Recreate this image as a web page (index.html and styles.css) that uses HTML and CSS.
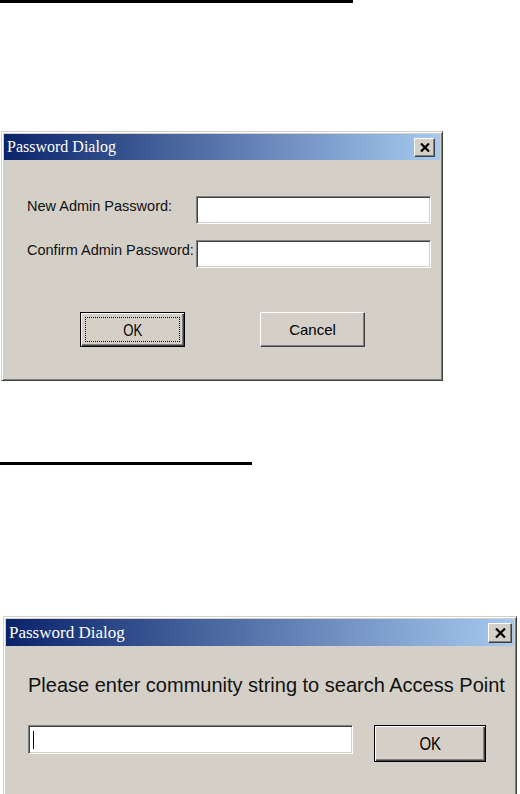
FILE: index.html
```html
<!DOCTYPE html>
<html>
	<head>
		<meta charset="UTF-8">
		<title>Password Dialog</title>
		<link rel="stylesheet" href="styles.css">
	</head>
	<body>
		<div class="page">
			<div class="rule rule-long"></div>

			<section class="dialog dialog-admin">
				<div class="titlebar">
					<span class="title">Password Dialog</span>
					<span class="close-btn">
						<svg width="10" height="9" viewBox="0 0 10 9"><path d="M1 0.5 L9 8.5 M9 0.5 L1 8.5" stroke="#000" stroke-width="2.2" fill="none"/></svg>
					</span>
				</div>
				<div class="admin-body">
					<div class="field-grid">
						<label class="field-label">New Admin Password:</label>
						<div class="textbox"></div>
						<label class="field-label">Confirm Admin Password:</label>
						<div class="textbox"></div>
					</div>
					<div class="button-row">
						<button class="btn btn-default"><span class="focus-ring"><span class="ok-text">OK</span></span></button>
						<button class="btn">Cancel</button>
					</div>
				</div>
			</section>

			<div class="rule rule-short"></div>

			<section class="dialog dialog-community">
				<div class="titlebar">
					<span class="title">Password Dialog</span>
					<span class="close-btn">
						<svg width="11" height="10" viewBox="0 0 11 10"><path d="M1 0.5 L10 9.5 M10 0.5 L1 9.5" stroke="#000" stroke-width="2.2" fill="none"/></svg>
					</span>
				</div>
				<div class="community-body">
					<p class="message">Please enter community string to search Access Point</p>
					<div class="entry-row">
						<div class="textbox textbox-wide"><span class="caret"></span></div>
						<button class="btn btn-default btn-wide"><span class="ok-text">OK</span></button>
					</div>
				</div>
			</section>
		</div>
	</body>
</html>
```
FILE: styles.css
```css
body{
    margin: 0;
    padding: 0;
    background: #fff;
    font-family: 'Liberation Sans', Arial, sans-serif;
}
.page{
    height: 794px;
    overflow: hidden;
}
.rule{
    height: 3px;
    background: #000;
}
.rule-long{
    width: 353px;
}
.rule-short{
    width: 252px;
    margin-top: 81px;
}

/* window frame */
.dialog{
    box-sizing: border-box;
    background: #d4d0c8;
    border: 1px solid;
    border-color: #d4d0c8 #404040 #404040 #d4d0c8;
    box-shadow: inset 1px 1px #fff, inset -1px -1px #808080;
    padding: 2px;
}
.dialog-admin{
    margin: 128px 0 0 1px;
    width: 442px;
    height: 250px;
}
.dialog-community{
    margin: 151px 0 0 3px;
    width: 514px;
    height: 210px;
}
.titlebar{
    height: 26px;
    display: flex;
    align-items: center;
    justify-content: space-between;
    padding: 0 5px 0 3px;
    background: linear-gradient(to right, #0a246a, #a6caf0);
}
.title{
    color: #fff;
    font-family: 'Liberation Serif', 'Times New Roman', serif;
    font-size: 16px;
}
.close-btn{
    box-sizing: border-box;
    width: 21px;
    height: 19px;
    display: flex;
    align-items: center;
    justify-content: center;
    background: #d4d0c8;
    border: 1px solid;
    border-color: #fff #404040 #404040 #fff;
    box-shadow: inset -1px -1px #808080;
}
.dialog-community .titlebar{
    height: 27px;
    padding-right: 2px;
}
.dialog-community .title{
    font-size: 17px;
}
.dialog-community .close-btn{
    width: 24px;
    height: 20px;
}

/* controls */
.textbox{
    box-sizing: border-box;
    height: 28px;
    background: #fff;
    border: 1px solid;
    border-color: #808080 #fff #fff #808080;
    box-shadow: inset 1px 1px #404040, inset -1px -1px #d4d0c8;
}
.btn{
    box-sizing: border-box;
    width: 105px;
    height: 35px;
    padding: 0;
    background: #d4d0c8;
    border: 1px solid;
    border-color: #fff #404040 #404040 #fff;
    box-shadow: inset -1px -1px #808080;
    font-family: 'Liberation Sans', Arial, sans-serif;
    font-size: 15px;
    color: #000;
}
.btn-default{
    border: 1px solid #000;
    box-shadow: inset 1px 1px #fff, inset -1px -1px #404040, inset -2px -2px #808080;
    display: flex;
    padding: 4px;
}
.focus-ring{
    flex: 1;
    display: flex;
    align-items: center;
    justify-content: center;
    border: 1px dotted #000;
}
.ok-text{
    display: inline-block;
    transform: scale(0.88, 1.12);
}

/* admin dialog */
.admin-body{
    padding: 36px 0 0 23px;
}
.field-grid{
    display: grid;
    grid-template-columns: 169px 235px;
    row-gap: 16px;
}
.field-label{
    font-size: 14.5px;
    line-height: 17px;
    padding-top: 2px;
    color: #111;
    white-space: nowrap;
}
.button-row{
    display: flex;
    gap: 75px;
    margin: 44px 0 0 53px;
}

/* community dialog */
.community-body{
    padding: 27px 0 0 22px;
}
.message{
    margin: 0;
    font-size: 20px;
    line-height: 24px;
    color: #111;
}
.entry-row{
    display: flex;
    align-items: flex-start;
    gap: 21px;
    margin-top: 28px;
}
.textbox-wide{
    width: 325px;
    height: 29px;
    display: flex;
    align-items: center;
    padding-left: 4px;
}
.caret{
    width: 1px;
    height: 18px;
    background: #000;
}
.btn-wide{
    width: 112px;
    height: 37px;
    font-size: 17px;
    align-items: center;
    justify-content: center;
}
```
